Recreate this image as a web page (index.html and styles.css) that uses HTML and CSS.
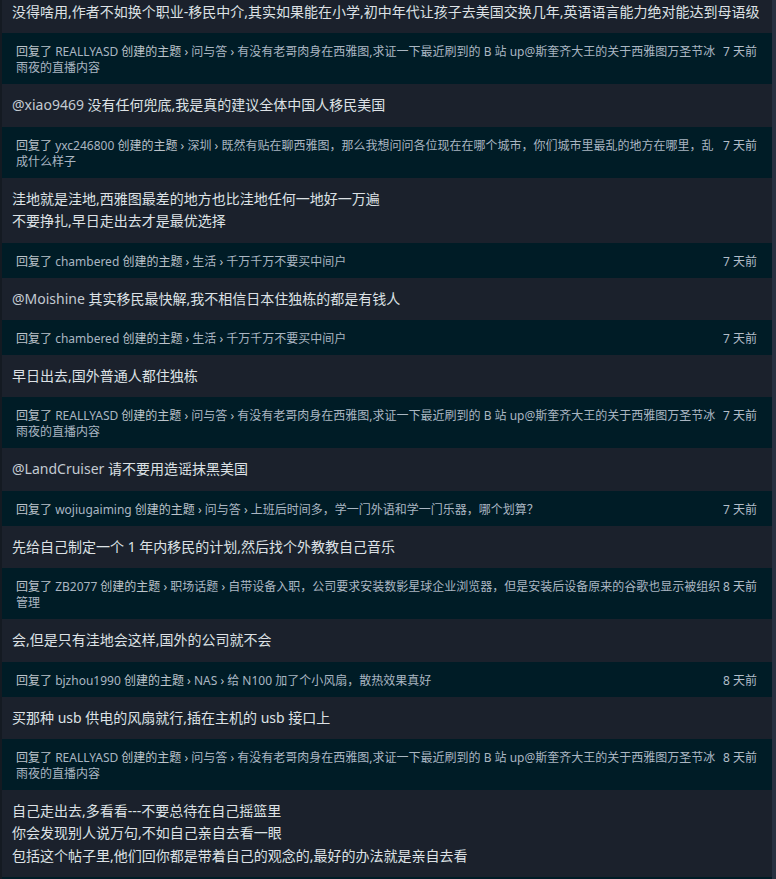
FILE: index.html
```html
<!DOCTYPE html>
<html>
<head>
	<meta charset="utf-8">
	<title>回复</title>
	<link rel="stylesheet" href="styles.css">
</head>
<body>
	<div class="box">
		<div class="reply">没得啥用,作者不如换个职业-移民中介,其实如果能在小学,初中年代让孩子去美国交换几年,英语语言能力绝对能达到母语级</div>

		<div class="dock">
			<span class="ago">7 天前</span>
			回复了 <a href="#">REALLYASD</a> 创建的主题 › <a href="#">问与答</a> › <a href="#">有没有老哥肉身在西雅图,求证一下最近刷到的 B 站 up@斯奎齐大王的关于西雅图万圣节冰雨夜的直播内容</a>
		</div>
		<div class="reply"><a href="#">@xiao9469</a> 没有任何兜底,我是真的建议全体中国人移民美国</div>

		<div class="dock">
			<span class="ago">7 天前</span>
			回复了 <a href="#">yxc246800</a> 创建的主题 › <a href="#">深圳</a> › <a href="#">既然有贴在聊西雅图，那么我想问问各位现在在哪个城市，你们城市里最乱的地方在哪里，乱成什么样子</a>
		</div>
		<div class="reply">洼地就是洼地,西雅图最差的地方也比洼地任何一地好一万遍<br>不要挣扎,早日走出去才是最优选择</div>

		<div class="dock">
			<span class="ago">7 天前</span>
			回复了 <a href="#">chambered</a> 创建的主题 › <a href="#">生活</a> › <a href="#">千万千万不要买中间户</a>
		</div>
		<div class="reply"><a href="#">@Moishine</a> 其实移民最快解,我不相信日本住独栋的都是有钱人</div>

		<div class="dock">
			<span class="ago">7 天前</span>
			回复了 <a href="#">chambered</a> 创建的主题 › <a href="#">生活</a> › <a href="#">千万千万不要买中间户</a>
		</div>
		<div class="reply">早日出去,国外普通人都住独栋</div>

		<div class="dock">
			<span class="ago">7 天前</span>
			回复了 <a href="#">REALLYASD</a> 创建的主题 › <a href="#">问与答</a> › <a href="#">有没有老哥肉身在西雅图,求证一下最近刷到的 B 站 up@斯奎齐大王的关于西雅图万圣节冰雨夜的直播内容</a>
		</div>
		<div class="reply"><a href="#">@LandCruiser</a> 请不要用造谣抹黑美国</div>

		<div class="dock">
			<span class="ago">7 天前</span>
			回复了 <a href="#">wojiugaiming</a> 创建的主题 › <a href="#">问与答</a> › <a href="#">上班后时间多，学一门外语和学一门乐器，哪个划算？</a>
		</div>
		<div class="reply">先给自己制定一个 1 年内移民的计划,然后找个外教教自己音乐</div>

		<div class="dock">
			<span class="ago">8 天前</span>
			回复了 <a href="#">ZB2077</a> 创建的主题 › <a href="#">职场话题</a> › <a href="#">自带设备入职，公司要求安装数影星球企业浏览器，但是安装后设备原来的谷歌也显示被组织管理</a>
		</div>
		<div class="reply">会,但是只有洼地会这样,国外的公司就不会</div>

		<div class="dock">
			<span class="ago">8 天前</span>
			回复了 <a href="#">bjzhou1990</a> 创建的主题 › <a href="#">NAS</a> › <a href="#">给 N100 加了个小风扇，散热效果真好</a>
		</div>
		<div class="reply">买那种 usb 供电的风扇就行,插在主机的 usb 接口上</div>

		<div class="dock">
			<span class="ago">8 天前</span>
			回复了 <a href="#">REALLYASD</a> 创建的主题 › <a href="#">问与答</a> › <a href="#">有没有老哥肉身在西雅图,求证一下最近刷到的 B 站 up@斯奎齐大王的关于西雅图万圣节冰雨夜的直播内容</a>
		</div>
		<div class="reply">自己走出去,多看看---不要总待在自己摇篮里<br>你会发现别人说万句,不如自己亲自去看一眼<br>包括这个帖子里,他们回你都是带着自己的观念的,最好的办法就是亲自去看</div>

		<div class="dock">
			<span class="ago">8 天前</span>
			回复了 <a href="#">REALLYASD</a> 创建的主题 › <a href="#">问与答</a> › <a href="#">有没有老哥肉身在西雅图</a>
		</div>
	</div>
</body>
</html>
```

FILE: styles.css
```css
body {
	margin: 0;
	background-color: #283040;
	font-family: "Noto Sans", "Noto Sans CJK SC", sans-serif;
	overflow: hidden;
}

a {
	text-decoration: none;
}

/* list is scrolled a little, first reply is cut at the top */
.box {
	width: 770px;
	margin-top: -9px;
	border-left: 2px solid #141a22;
}

.reply {
	padding: 10px;
	font-size: 14px;
	line-height: 1.6;
	color: #dde1e5;
	background-color: #1b212c;
	word-break: break-all;
}

.reply a {
	color: #c3cad2;
}

.dock {
	padding: 11px 15px 8px 14px;
	font-size: 12px;
	line-height: 16px;
	color: #bcc3ca;
	background-color: #001c26;
}

.dock a {
	color: #aab6c2;
}

.dock .ago {
	float: right;
	color: #b2bdc8;
}
```
